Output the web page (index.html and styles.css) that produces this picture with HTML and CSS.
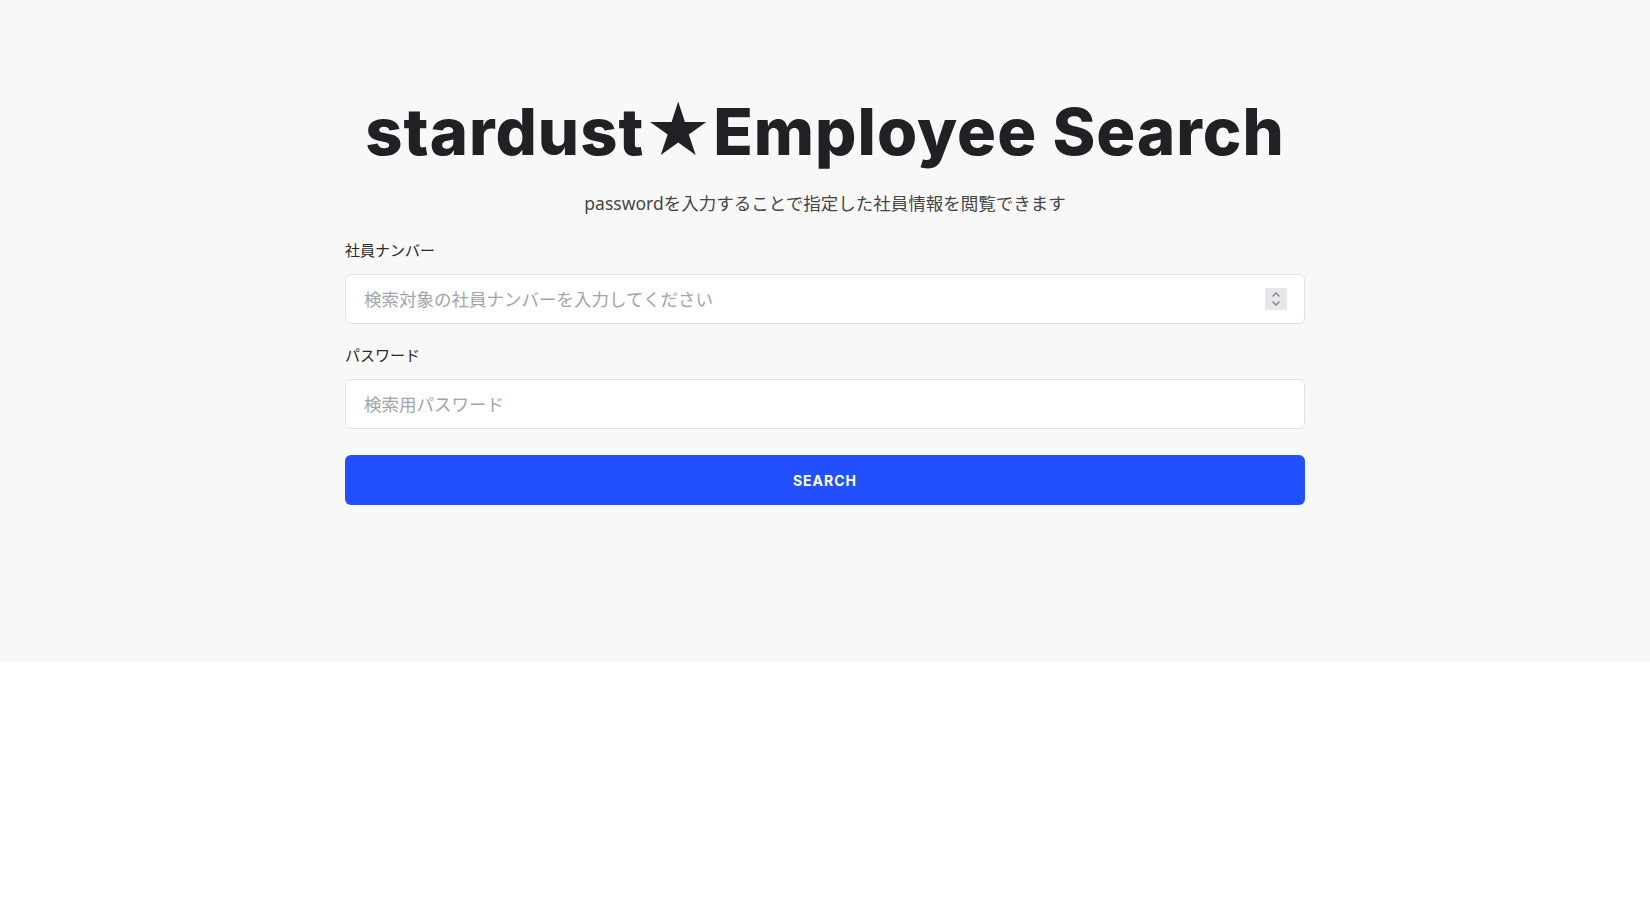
FILE: index.html
```html
<!DOCTYPE html>
<html lang="ja">
<head>
<meta charset="utf-8">
<title>stardust★Employee Search</title>
<link rel="stylesheet" href="styles.css">
</head>
<body>
<section class="hero">
  <div class="container">
    <h1 class="title">stardust★Employee Search</h1>
    <p class="subtitle">passwordを入力することで指定した社員情報を閲覧できます</p>
    <form class="form">
      <label class="label" for="num">社員ナンバー</label>
      <div class="field">
        <input class="input" id="num" type="text" placeholder="検索対象の社員ナンバーを入力してください">
        <span class="spin" aria-hidden="true">
          <svg width="10" height="16" viewBox="0 0 10 16"><path d="M1.5 5.5 L5 2 L8.5 5.5" fill="none" stroke="#85858f" stroke-width="1.4"/><path d="M1.5 10.5 L5 14 L8.5 10.5" fill="none" stroke="#85858f" stroke-width="1.4"/></svg>
        </span>
      </div>
      <label class="label label-2" for="pw">パスワード</label>
      <div class="field">
        <input class="input" id="pw" type="password" placeholder="検索用パスワード">
      </div>
      <button class="button" type="button">SEARCH</button>
    </form>
  </div>
</section>
</body>
</html>
```

FILE: styles.css
```css
html, body {
  margin: 0;
  padding: 0;
  background: #ffffff;
}
body {
  font-family: "Inter", "Noto Sans CJK JP", sans-serif;
  color: #222;
}
.hero {
  background: #f8f8f8;
  height: 662px;
  box-sizing: border-box;
  padding-top: 92px;
}
.container {
  width: 960px;
  margin: 0 auto;
  display: flex;
  flex-direction: column;
}
.title {
  margin: 0;
  font-family: "Inter", sans-serif;
  font-weight: 800;
  font-size: 65px;
  line-height: 80px;
  text-align: center;
  color: #202124;
  letter-spacing: 1px;
}
.subtitle {
  margin: 19px 0 0;
  font-family: "Noto Sans", "Noto Sans CJK JP", sans-serif;
  font-size: 17.5px;
  line-height: 24px;
  text-align: center;
  color: #454545;
}
.form {
  margin-top: 23px;
  display: flex;
  flex-direction: column;
}
.label {
  font-family: "Noto Sans CJK JP", sans-serif;
  font-size: 15px;
  line-height: 24px;
  color: #2a2a2a;
  margin-bottom: 12px;
}
.label-2 {
  margin-top: 19px;
  margin-bottom: 12px;
}
.field {
  position: relative;
}
.input {
  display: block;
  width: 100%;
  box-sizing: border-box;
  height: 50px;
  padding: 0 18px 2px;
  border: 1px solid #e2e0eb;
  border-radius: 6px;
  background: #ffffff;
  font-family: "Noto Sans CJK JP", sans-serif;
  font-size: 17.5px;
  color: #333;
  outline: none;
}
.input::placeholder {
  color: #a2a3ab;
}
.spin {
  position: absolute;
  right: 18px;
  top: 14px;
  width: 22px;
  height: 22px;
  background: #e6e6ec;
  display: flex;
  align-items: center;
  justify-content: center;
}
.button {
  margin-top: 26px;
  height: 50px;
  border: none;
  border-radius: 6px;
  background: #2350ff;
  color: #ffffff;
  font-family: "Inter", sans-serif;
  font-weight: 700;
  font-size: 14px;
  letter-spacing: 1px;
  cursor: pointer;
}
```
